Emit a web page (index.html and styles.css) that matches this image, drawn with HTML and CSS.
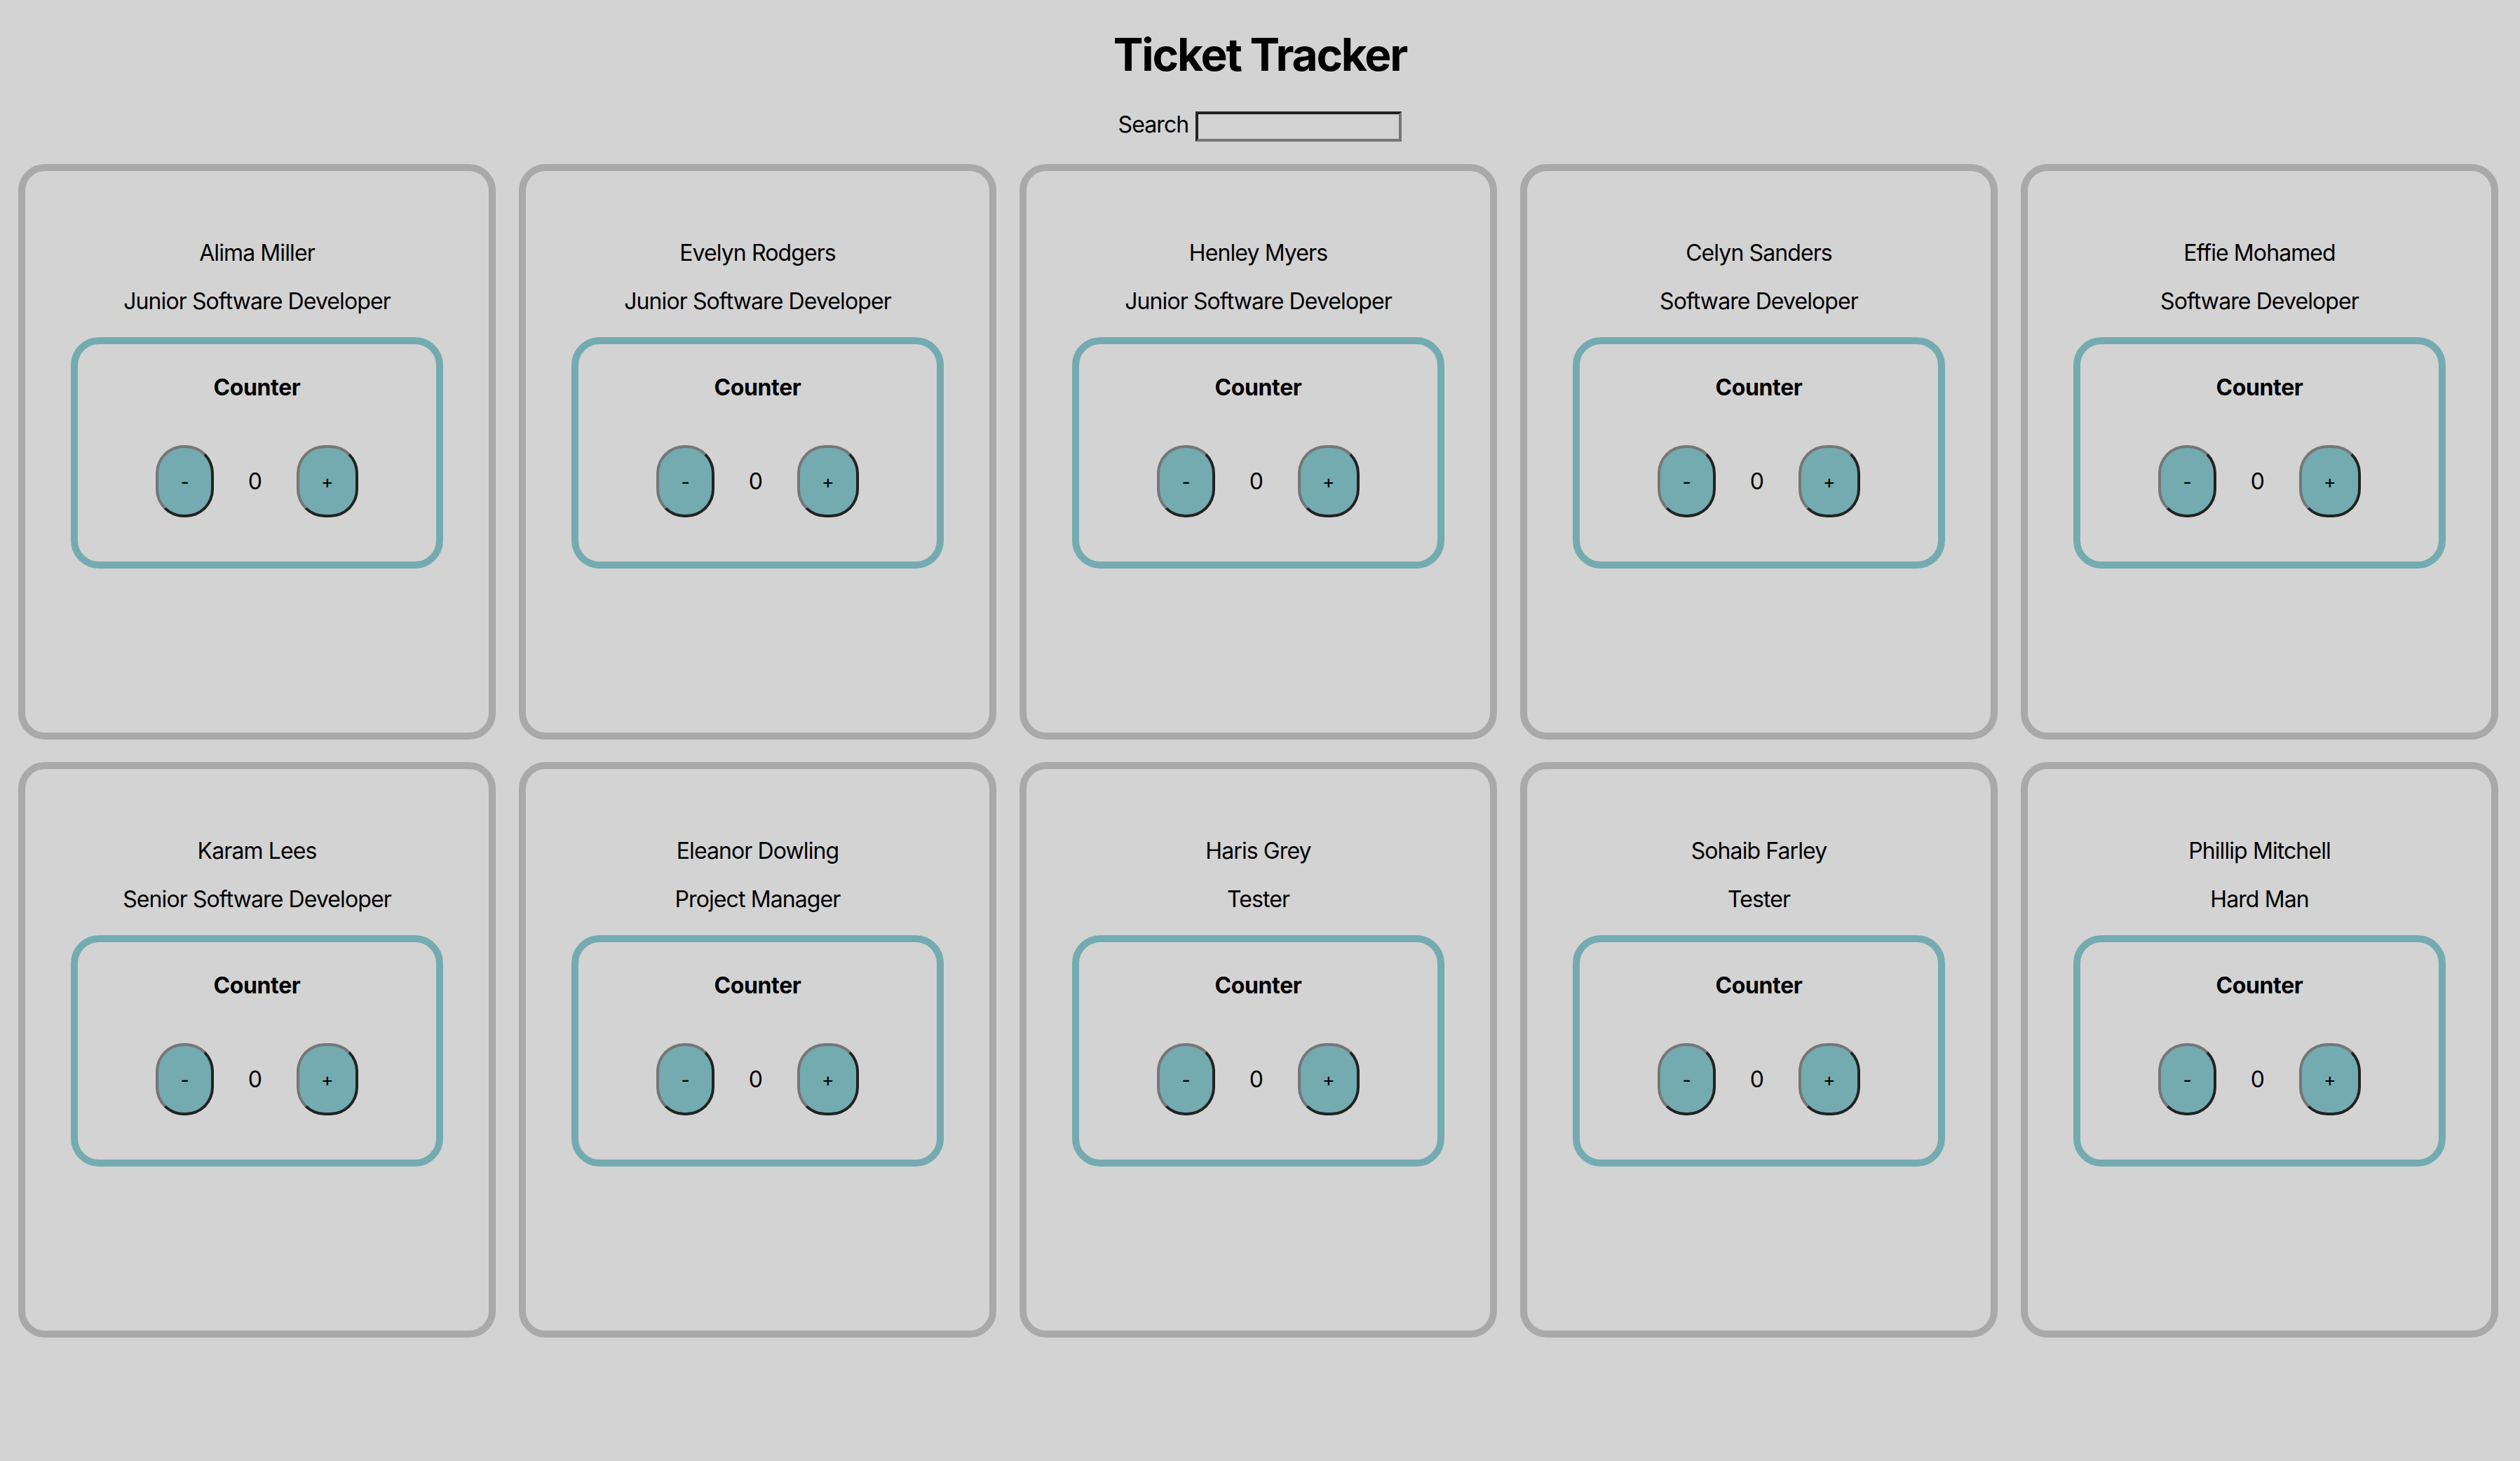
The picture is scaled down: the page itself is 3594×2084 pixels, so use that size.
FILE: index.html
```html
<!DOCTYPE html>
<html>
<head>
    <link rel="stylesheet" href="styles.css">
</head>
<body>
<h1 class="title">Ticket Tracker</h1>
<div class="search">
    <label for="search">Search</label>
    <input type="text" id="search">
</div>
<div class="cards">
    <div class="card">
        <p class="name">Alima Miller</p>
        <p class="role">Junior Software Developer</p>
        <div class="counter">
            <h4>Counter</h4>
            <div class="controls">
                <button class="btn">-</button>
                <span class="count">0</span>
                <button class="btn">+</button>
            </div>
        </div>
    </div>
    <div class="card">
        <p class="name">Evelyn Rodgers</p>
        <p class="role">Junior Software Developer</p>
        <div class="counter">
            <h4>Counter</h4>
            <div class="controls">
                <button class="btn">-</button>
                <span class="count">0</span>
                <button class="btn">+</button>
            </div>
        </div>
    </div>
    <div class="card">
        <p class="name">Henley Myers</p>
        <p class="role">Junior Software Developer</p>
        <div class="counter">
            <h4>Counter</h4>
            <div class="controls">
                <button class="btn">-</button>
                <span class="count">0</span>
                <button class="btn">+</button>
            </div>
        </div>
    </div>
    <div class="card">
        <p class="name">Celyn Sanders</p>
        <p class="role">Software Developer</p>
        <div class="counter">
            <h4>Counter</h4>
            <div class="controls">
                <button class="btn">-</button>
                <span class="count">0</span>
                <button class="btn">+</button>
            </div>
        </div>
    </div>
    <div class="card">
        <p class="name">Effie Mohamed</p>
        <p class="role">Software Developer</p>
        <div class="counter">
            <h4>Counter</h4>
            <div class="controls">
                <button class="btn">-</button>
                <span class="count">0</span>
                <button class="btn">+</button>
            </div>
        </div>
    </div>
    <div class="card">
        <p class="name">Karam Lees</p>
        <p class="role">Senior Software Developer</p>
        <div class="counter">
            <h4>Counter</h4>
            <div class="controls">
                <button class="btn">-</button>
                <span class="count">0</span>
                <button class="btn">+</button>
            </div>
        </div>
    </div>
    <div class="card">
        <p class="name">Eleanor Dowling</p>
        <p class="role">Project Manager</p>
        <div class="counter">
            <h4>Counter</h4>
            <div class="controls">
                <button class="btn">-</button>
                <span class="count">0</span>
                <button class="btn">+</button>
            </div>
        </div>
    </div>
    <div class="card">
        <p class="name">Haris Grey</p>
        <p class="role">Tester</p>
        <div class="counter">
            <h4>Counter</h4>
            <div class="controls">
                <button class="btn">-</button>
                <span class="count">0</span>
                <button class="btn">+</button>
            </div>
        </div>
    </div>
    <div class="card">
        <p class="name">Sohaib Farley</p>
        <p class="role">Tester</p>
        <div class="counter">
            <h4>Counter</h4>
            <div class="controls">
                <button class="btn">-</button>
                <span class="count">0</span>
                <button class="btn">+</button>
            </div>
        </div>
    </div>
    <div class="card">
        <p class="name">Phillip Mitchell</p>
        <p class="role">Hard Man</p>
        <div class="counter">
            <h4>Counter</h4>
            <div class="controls">
                <button class="btn">-</button>
                <span class="count">0</span>
                <button class="btn">+</button>
            </div>
        </div>
    </div>
</div>
</body>
</html>
```

FILE: styles.css
```css
body {
    margin: 0;
    background-color: #d3d3d3;
    font-family: Inter, "Noto Sans", sans-serif;
    color: #000;
}
.title {
    margin: 39px 0 0;
    font-size: 64px;
    font-weight: 700;
    line-height: 78px;
    letter-spacing: -2.2px;
    text-align: center;
}
.search {
    display: flex;
    justify-content: center;
    align-items: center;
    gap: 10px;
    height: 43px;
    margin-top: 42px;
    font-size: 32px;
}
.search label {
    padding-bottom: 6px;
    letter-spacing: -0.9px;
}
.search input {
    box-sizing: border-box;
    width: 294px;
    height: 43px;
    padding: 0;
    border: 4px solid;
    border-color: #222 #767676 #767676 #222;
    background-color: transparent;
}
.cards {
    display: grid;
    grid-template-columns: repeat(5, 681px);
    column-gap: 33px;
    row-gap: 32px;
    margin-top: 32px;
    padding-left: 26px;
}
.card {
    box-sizing: border-box;
    height: 821px;
    padding-top: 97px;
    border: 10px solid #a9a9a9;
    border-radius: 38px;
    font-size: 32px;
    text-align: center;
}
.card p {
    margin: 0;
    letter-spacing: -0.9px;
}
.role {
    margin-top: 30px !important;
}
.counter {
    box-sizing: border-box;
    width: 531px;
    height: 330px;
    margin: 32px auto 0;
    padding-top: 42px;
    border: 10px solid #73abb0;
    border-radius: 40px;
}
.counter h4 {
    margin: 0;
    font-size: 32px;
    font-weight: 700;
    letter-spacing: -0.4px;
}
.controls {
    display: flex;
    justify-content: center;
    align-items: center;
    gap: 49px;
    margin-top: 63px;
}
.btn {
    box-sizing: border-box;
    height: 103px;
    padding: 0 31px;
    border: 4px solid;
    border-color: #767676 #222 #222 #767676;
    border-radius: 40px;
    background-color: #73abb0;
    font-family: Inter, "Noto Sans", sans-serif;
    font-size: 26.67px;
    color: #000;
    cursor: pointer;
}
.count {
    font-size: 32px;
}
```
